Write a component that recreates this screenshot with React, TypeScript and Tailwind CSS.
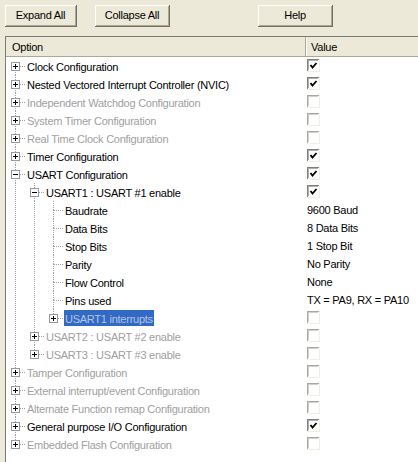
import type { ReactNode } from 'react';

type Node = {
  depth: number;
  label: string;
  expander?: 'plus' | 'minus';
  disabled?: boolean;
  checked?: boolean;
  check?: boolean;
  value?: string;
  selected?: boolean;
};

const rows: Node[] = [
  { depth: 0, label: 'Clock Configuration', expander: 'plus', check: true, checked: true },
  { depth: 0, label: 'Nested Vectored Interrupt Controller (NVIC)', expander: 'plus', check: true, checked: true },
  { depth: 0, label: 'Independent Watchdog Configuration', expander: 'plus', check: true, disabled: true },
  { depth: 0, label: 'System Timer Configuration', expander: 'plus', check: true, disabled: true },
  { depth: 0, label: 'Real Time Clock Configuration', expander: 'plus', check: true, disabled: true },
  { depth: 0, label: 'Timer Configuration', expander: 'plus', check: true, checked: true },
  { depth: 0, label: 'USART Configuration', expander: 'minus', check: true, checked: true },
  { depth: 1, label: 'USART1 : USART #1 enable', expander: 'minus', check: true, checked: true },
  { depth: 2, label: 'Baudrate', value: '9600 Baud' },
  { depth: 2, label: 'Data Bits', value: '8 Data Bits' },
  { depth: 2, label: 'Stop Bits', value: '1 Stop Bit' },
  { depth: 2, label: 'Parity', value: 'No Parity' },
  { depth: 2, label: 'Flow Control', value: 'None' },
  { depth: 2, label: 'Pins used', value: 'TX = PA9, RX = PA10' },
  { depth: 2, label: 'USART1 interrupts', expander: 'plus', check: true, disabled: true, selected: true },
  { depth: 1, label: 'USART2 : USART #2 enable', expander: 'plus', check: true, disabled: true },
  { depth: 1, label: 'USART3 : USART #3 enable', expander: 'plus', check: true, disabled: true },
  { depth: 0, label: 'Tamper Configuration', expander: 'plus', check: true, disabled: true },
  { depth: 0, label: 'External interrupt/event Configuration', expander: 'plus', check: true, disabled: true },
  { depth: 0, label: 'Alternate Function remap Configuration', expander: 'plus', check: true, disabled: true },
  { depth: 0, label: 'General purpose I/O Configuration', expander: 'plus', check: true, checked: true },
  { depth: 0, label: 'Embedded Flash Configuration', expander: 'plus', check: true, disabled: true },
];

// does row i have a later sibling at the same depth?
function hasNextSibling(i: number) {
  const d = rows[i].depth;
  for (let j = i + 1; j < rows.length; j++) {
    if (rows[j].depth < d) return false;
    if (rows[j].depth === d) return true;
  }
  return false;
}

// line continuing at column k for row i (ancestor at depth k has more siblings)
function ancestorContinues(i: number, k: number) {
  for (let j = i - 1; j >= 0; j--) {
    if (rows[j].depth === k) return hasNextSibling(j);
  }
  return false;
}

const DOT = '#a0a0a0';

function Pipe({ on }: { on: boolean }) {
  return (
    <svg width="19" height="18" className="shrink-0" shapeRendering="crispEdges">
      {on && <line x1="9.5" y1="0" x2="9.5" y2="18" stroke={DOT} strokeDasharray="1 1" />}
    </svg>
  );
}

function Joint({ top, bottom, expander }: { top: boolean; bottom: boolean; expander?: 'plus' | 'minus' }) {
  return (
    <svg width="19" height="18" className="shrink-0" shapeRendering="crispEdges">
      {top && <line x1="9.5" y1="0" x2="9.5" y2="9" stroke={DOT} strokeDasharray="1 1" />}
      {bottom && <line x1="9.5" y1="9" x2="9.5" y2="18" stroke={DOT} strokeDasharray="1 1" />}
      <line x1={expander ? 14 : 10} y1="9.5" x2="19" y2="9.5" stroke={DOT} strokeDasharray="1 1" />
      {expander && (
        <>
          <rect x="5.5" y="5.5" width="8" height="8" fill="#ffffff" stroke="#919b9c" />
          <line x1="7" y1="9.5" x2="12" y2="9.5" stroke="#000000" />
          {expander === 'plus' && <line x1="9.5" y1="7" x2="9.5" y2="12" stroke="#000000" />}
        </>
      )}
    </svg>
  );
}

function CheckBox({ checked, disabled }: { checked?: boolean; disabled?: boolean }) {
  const dark = disabled ? '#a7a7a7' : '#808080';
  return (
    <svg width="13" height="13" className="mb-[2px]" shapeRendering="crispEdges">
      <rect x="0" y="0" width="13" height="13" fill="#ffffff" />
      <line x1="0" y1="0.5" x2="12" y2="0.5" stroke={dark} />
      <line x1="0.5" y1="0" x2="0.5" y2="12" stroke={dark} />
      <line x1="1" y1="1.5" x2="11" y2="1.5" stroke={disabled ? '#d4d0c8' : '#b0b0b0'} />
      <line x1="1.5" y1="1" x2="1.5" y2="11" stroke={disabled ? '#d4d0c8' : '#b0b0b0'} />
      <line x1="0" y1="12.5" x2="13" y2="12.5" stroke="#f1efe2" />
      <line x1="12.5" y1="0" x2="12.5" y2="13" stroke="#f1efe2" />
      {checked && (
        <polyline
          points="3.5,6 5.5,8.5 9.5,4"
          fill="none"
          stroke="#000000"
          strokeWidth="1.8"
          shapeRendering="geometricPrecision"
        />
      )}
    </svg>
  );
}

function Button({ children, className }: { children: ReactNode; className: string }) {
  return (
    <button
      className={`flex h-[22px] items-center justify-center border-r border-b border-[#716f64] bg-[#ece9d8] text-[11px] text-black shadow-[inset_1px_1px_0_#ffffff,inset_-1px_-1px_0_#aca899] ${className}`}
    >
      {children}
    </button>
  );
}

export default function App() {
  return (
    <div
      className="flex h-[462px] w-[418px] flex-col overflow-hidden bg-[#ece9d8] text-[11px] tracking-[-0.25px] text-black"
      style={{ fontFamily: '"Liberation Sans", Arial, sans-serif' }}
    >
      <div className="flex h-[36px] shrink-0 items-start pt-[5px] pl-[5px]">
        <Button className="w-[72px]">Expand All</Button>
        <Button className="ml-[18px] w-[75px]">Collapse All</Button>
        <Button className="ml-[88px] w-[75px]">Help</Button>
      </div>

      <div className="ml-[5px] flex flex-1 flex-col border-t border-l border-[#7a7a7a] bg-white">
        <div className="flex h-[20px] shrink-0 border-b border-[#aca899] bg-[#ece9d8]">
          <div className="flex w-[300px] shrink-0 items-center border-r border-[#aca899] pt-px pl-[6px] shadow-[1px_0_0_#ffffff]">
            Option
          </div>
          <div className="flex items-center pt-px pl-[5px]">Value</div>
        </div>

        <div className="flex flex-col">
          {rows.map((row, i) => {
            const guides = [];
            for (let k = 0; k < row.depth; k++) {
              guides.push(<Pipe key={k} on={ancestorContinues(i, k)} />);
            }
            const top = !(i === 0 && row.depth === 0);
            return (
              <div key={i} className="flex h-[18px] items-center">
                <div className="flex w-[300px] shrink-0 items-center">
                  {guides}
                  <Joint top={top} bottom={hasNextSibling(i)} expander={row.expander} />
                  <span
                    className={`ml-px h-[16px] px-px leading-[18px] whitespace-nowrap ${
                      row.selected
                        ? 'bg-[#316ac5] text-[#b6c3e0]'
                        : row.disabled
                          ? 'text-[#a0a0a0]'
                          : 'text-black'
                    }`}
                  >
                    {row.label}
                  </span>
                </div>
                <div className="flex h-[18px] items-center pl-px leading-[20px] whitespace-nowrap">
                  {row.check ? <CheckBox checked={row.checked} disabled={row.disabled} /> : row.value}
                </div>
              </div>
            );
          })}
        </div>
      </div>
    </div>
  );
}
